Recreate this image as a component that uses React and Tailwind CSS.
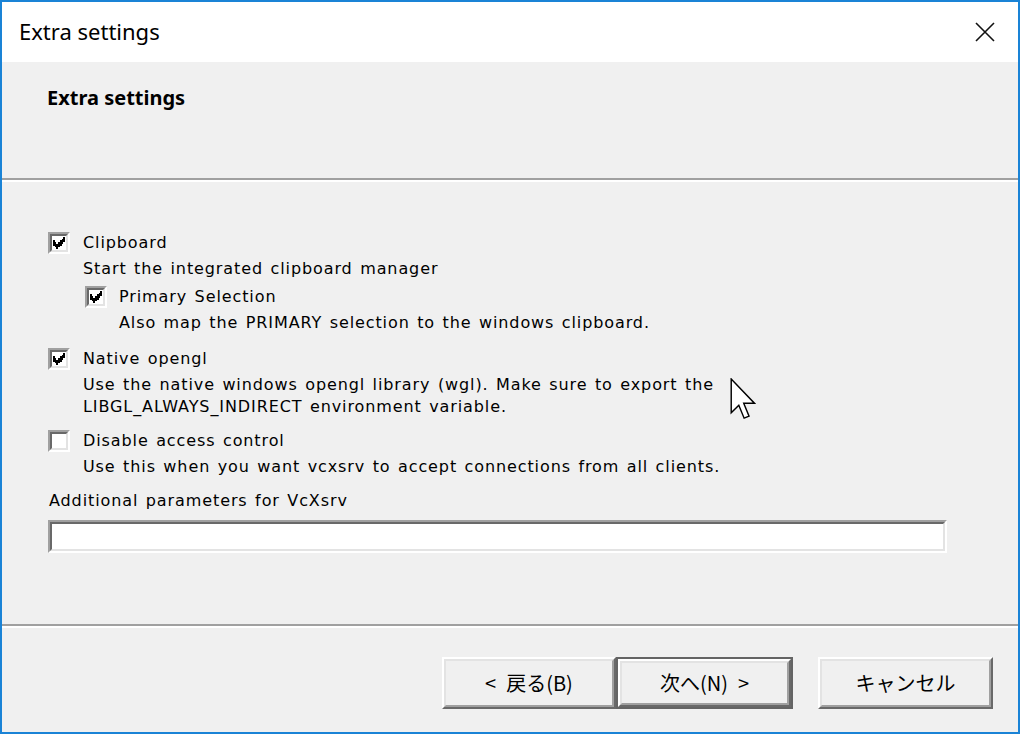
import React from "react";

const COLS = [
  [0, 2], [1, 3], [2, 4], [3, 3], [4, 2], [5, 1], [6, 0],
];

function CheckBox({ checked }) {
  return (
    <div className="w-[22px] h-[22px] shrink-0 border-2 border-t-[#a0a0a0] border-l-[#a0a0a0] border-b-white border-r-white">
      <div className="w-full h-full border-2 border-t-[#696969] border-l-[#696969] border-b-[#e3e3e3] border-r-[#e3e3e3] bg-white flex items-center justify-center">
        {checked && (
          <svg width="12" height="12" viewBox="0 0 7 7" shapeRendering="crispEdges">
            {COLS.map(([x, y]) => (
              <rect key={x} x={x} y={y} width="1" height="3" fill="#000" />
            ))}
          </svg>
        )}
      </div>
    </div>
  );
}

function Option({ checked, label, desc }) {
  return (
    <div>
      <div className="flex items-center h-[26px]">
        <CheckBox checked={checked} />
        <span className="ml-[13px] whitespace-nowrap">{label}</span>
      </div>
      <div className="pl-[35px] mt-[2px] leading-[22px]">
        {desc.map((d, i) => (
          <div key={i} className="whitespace-nowrap">{d}</div>
        ))}
      </div>
    </div>
  );
}

function Btn({ children, isDefault, w }) {
  const face = (
    <div className="h-full w-full border-2 border-t-white border-l-white border-b-[#696969] border-r-[#696969]">
      <div className="h-full w-full border-2 border-t-[#e3e3e3] border-l-[#e3e3e3] border-b-[#a0a0a0] border-r-[#a0a0a0] bg-[#f0f0f0] flex items-center justify-center font-['Noto_Sans_CJK_JP',sans-serif] text-[20px] text-black whitespace-pre">
        {children}
      </div>
    </div>
  );
  if (isDefault) {
    return (
      <div className="w-[177px] h-[52px] border-2 border-[#646464]">{face}</div>
    );
  }
  return <div className={w + " h-[52px]"}>{face}</div>;
}

export default function App() {
  return (
    <div className="relative w-[1020px] h-[734px] border-2 border-[#1a83d6] bg-[#f0f0f0] flex flex-col overflow-hidden">
      {/* Title bar */}
      <div className="h-[60px] bg-white flex items-center justify-between shrink-0">
        <span className="pl-[17px] pb-[2px] font-['Noto_Sans',sans-serif] text-[22px] text-black">
          Extra settings
        </span>
        <svg className="mr-[23px]" width="20" height="20" viewBox="0 0 20 20">
          <path d="M1 1 L19 19 M19 1 L1 19" stroke="#111" strokeWidth="1.6" fill="none" />
        </svg>
      </div>

      {/* Header */}
      <div className="h-[116px] shrink-0 pt-[21px] pl-[45px]">
        <span className="font-['Noto_Sans',sans-serif] font-bold text-[20px] text-black">
          Extra settings
        </span>
      </div>
      <div className="h-[2px] bg-[#a0a0a0] shrink-0" />
      <div className="h-[2px] bg-white shrink-0" />

      {/* Body */}
      <div className="flex-1 pt-[48px] pl-[46px] font-['DejaVu_Sans',sans-serif] text-[16px] tracking-[0.9px] [word-spacing:1.5px] text-black">
        <Option
          checked
          label="Clipboard"
          desc={["Start the integrated clipboard manager"]}
        />
        <div className="mt-[4px] pl-[37px]">
          <div className="flex items-center h-[26px]">
            <CheckBox checked />
            <span className="ml-[12px] whitespace-nowrap">Primary Selection</span>
          </div>
          <div className="pl-[34px] mt-[2px] leading-[22px] whitespace-nowrap">
            Also map the PRIMARY selection to the windows clipboard.
          </div>
        </div>
        <div className="mt-[12px]">
          <Option
            checked
            label="Native opengl"
            desc={[
              "Use the native windows opengl library (wgl). Make sure to export the",
              "LIBGL_ALWAYS_INDIRECT environment variable.",
            ]}
          />
        </div>
        <div className="mt-[10px]">
          <Option
            checked={false}
            label="Disable access control"
            desc={["Use this when you want vcxsrv to accept connections from all clients."]}
          />
        </div>
        <div className="mt-[12px] h-[22px] leading-[22px] pl-[1px] whitespace-nowrap">
          Additional parameters for VcXsrv
        </div>
        <div className="mt-[8px] w-[899px] h-[33px] border-2 border-t-[#a0a0a0] border-l-[#a0a0a0] border-b-white border-r-white">
          <div className="w-full h-full border-2 border-t-[#696969] border-l-[#696969] border-b-[#e3e3e3] border-r-[#e3e3e3] bg-white" />
        </div>
      </div>

      {/* Footer */}
      <div className="h-[2px] bg-[#a0a0a0] shrink-0" />
      <div className="h-[2px] bg-white shrink-0" />
      <div className="h-[104px] shrink-0 pt-[29px] pr-[25px] flex justify-end items-start">
        <Btn w="w-[174px]">{"<\u2002戻る(B)"}</Btn>
        <Btn isDefault>{"次へ(N)\u2002>"}</Btn>
        <div className="ml-[25px]">
          <Btn w="w-[175px]">キャンセル</Btn>
        </div>
      </div>

      {/* Mouse cursor */}
      <svg
        className="absolute left-[728px] top-[376px]"
        width="26"
        height="42"
        viewBox="0 0 12.5 20.5"
      >
        <path
          d="M0.5 0.5 L0.5 17 L4.2 13.3 L6.8 19.6 L9.2 18.6 L6.6 12.3 L11.8 12.3 Z"
          fill="#fff"
          stroke="#000"
          strokeWidth="0.7"
          strokeLinejoin="miter"
        />
      </svg>
    </div>
  );
}
